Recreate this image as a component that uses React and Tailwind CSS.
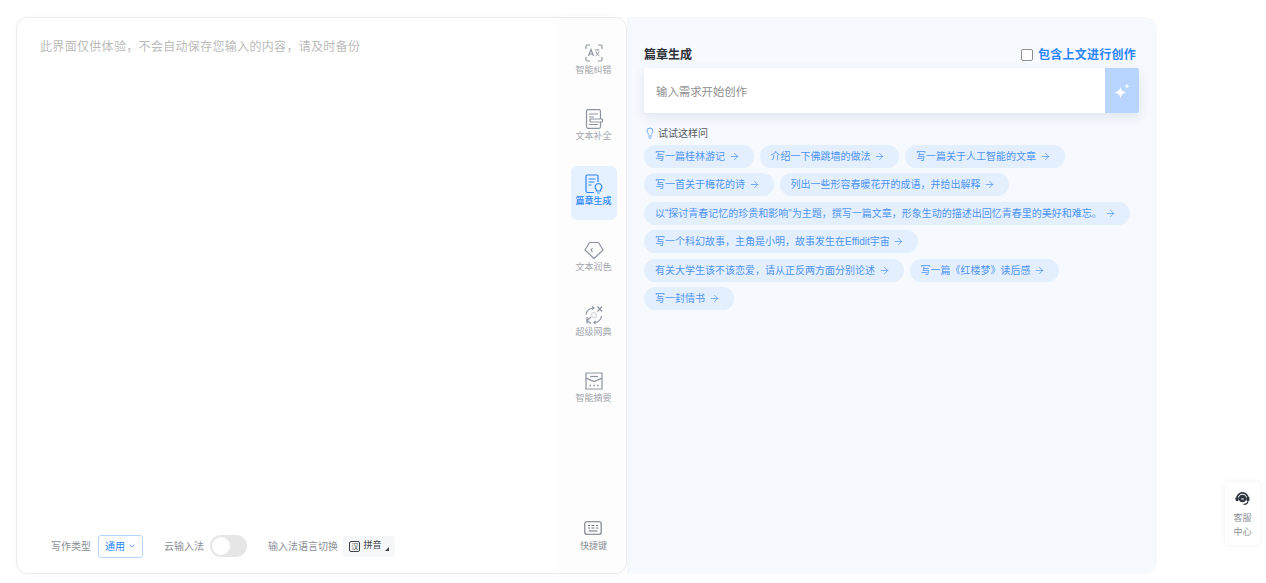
import { ArrowRight, ChevronDown, Lightbulb } from 'lucide-react';

const FONT = "font-['Liberation_Sans','Noto_Sans_CJK_SC',sans-serif]";

const IconCorrect = ({ color = '#8d95a3' }) => (
  <svg width="20" height="20" viewBox="0 0 20 20" fill="none" stroke={color} strokeWidth="1.2">
    <path d="M2 6V3.5A1.5 1.5 0 0 1 3.5 2H6M14 2h2.5A1.5 1.5 0 0 1 18 3.5V6M18 14v2.5a1.5 1.5 0 0 1-1.5 1.5H14M6 18H3.5A1.5 1.5 0 0 1 2 16.5V14" />
    <path d="M4.5 13L7 6.5 9.5 13M5.4 11h3.2" />
    <path d="M11 7h4.5M13.2 6v1M11.8 8.5c.8 2 2 3.5 3.7 4.5M15 8.5c-.7 2-1.8 3.5-3.5 4.5" strokeWidth="0.9" />
  </svg>
);

const IconComplete = ({ color = '#8d95a3' }) => (
  <svg width="20" height="20" viewBox="0 0 20 20" fill="none" stroke={color} strokeWidth="1.2">
    <rect x="2.5" y="0.7" width="14" height="18.6" rx="1.5" />
    <path d="M5 5h9M5 8h5M5 15.5h9" />
    <rect x="6" y="10" width="12.5" height="3" rx="0.5" fill="#fff" />
  </svg>
);

const IconArticle = ({ color = '#2b85ff' }) => (
  <svg width="20" height="20" viewBox="0 0 20 20" fill="none" stroke={color} strokeWidth="1.2">
    <path d="M10 18.5H3.5A1.5 1.5 0 0 1 2 17V2.5A1.5 1.5 0 0 1 3.5 1h9A1.5 1.5 0 0 1 14 2.5V8" />
    <path d="M4.5 5h7M4.5 8h6M4.5 11h3" />
    <path d="M14.5 9.5a3.5 3.5 0 0 1 2 6.3V17h-4v-1.2a3.5 3.5 0 0 1 2-6.3zM13.3 19h2.4" />
  </svg>
);

const IconPolish = ({ color = '#8d95a3' }) => (
  <svg width="20" height="20" viewBox="0 0 20 20" fill="none" stroke={color} strokeWidth="1.2">
    <path d="M5.5 2.5h9L19 10l-9 8.5L1 10z" strokeLinejoin="round" />
    <path d="M8.5 8L7 10l1.5 2" />
  </svg>
);

const IconDict = ({ color = '#8d95a3' }) => (
  <svg width="20" height="20" viewBox="0 0 20 20" fill="none" stroke={color} strokeWidth="1.2">
    <path d="M2 9.5A7.5 7.5 0 0 1 9.5 3M10.5 17.5a7.5 7.5 0 0 0 7-6.5" />
    <path d="M8 1.5L10 3 8 4.5M11.5 16L10 17.5l1.5 1.5" />
    <path d="M13.5 1.5l4.5 5M18 1.5l-4.5 5M3 12v6.5M7 12l-4 3.5 4 3" />
    <circle cx="10" cy="10" r="2.5" stroke="#d7dae0" />
  </svg>
);

const IconSummary = ({ color = '#8d95a3' }) => (
  <svg width="20" height="20" viewBox="0 0 20 20" fill="none" stroke={color} strokeWidth="1.2">
    <path d="M2 2h16v5l-8 3.5L2 7zM2 7v11h16V7" />
    <path d="M6 5.5h8" />
    <path d="M5.5 14.5H7M9.3 14.5h1.5M13 14.5h1.5" strokeWidth="1.5" />
  </svg>
);

const IconKeyboard = () => (
  <svg width="18" height="14" viewBox="0 0 18 14" fill="none" stroke="#6f7682" strokeWidth="1.1">
    <rect x="0.8" y="0.8" width="16.4" height="12.4" rx="2" />
    <path d="M4 4.5h2M7.5 4.5h3M12 4.5h2M4 7h2M7.5 7h3M12 7h2M4.5 10h9" />
  </svg>
);

const IconHeadset = () => (
  <svg width="15" height="15" viewBox="0 0 14 14" fill="none">
    <path d="M1.8 7a5.2 5.2 0 0 1 10.4 0" stroke="#2f3540" strokeWidth="1.6" />
    <rect x="0.5" y="5.5" width="3" height="4" rx="1.3" fill="#2f3540" />
    <rect x="10.5" y="5.5" width="3" height="4" rx="1.3" fill="#2f3540" />
    <circle cx="7" cy="7" r="3.4" fill="#2f3540" />
    <path d="M5.8 7.5h2.4" stroke="#fff" strokeWidth="1" />
    <path d="M12 9.5c0 2-1.5 2.8-4 3" stroke="#2f3540" strokeWidth="1.1" />
  </svg>
);

const IconSparkle = () => (
  <svg width="16" height="16" viewBox="0 0 16 16" fill="#fff">
    <path d="M6.5 3.5C7 7 8.5 8.5 12.5 9.5 8.5 10.5 7 12 6.5 15.5 6 12 4.5 10.5.5 9.5 4.5 8.5 6 7 6.5 3.5z" />
    <path d="M13 .5c.2 1.5.9 2.3 2.5 2.7-1.6.4-2.3 1.1-2.5 2.7-.2-1.6-.9-2.3-2.5-2.7C12.1 2.8 12.8 2 13 .5z" />
  </svg>
);

const tools = [
  { label: '智能纠错', Icon: IconCorrect },
  { label: '文本补全', Icon: IconComplete },
  { label: '篇章生成', Icon: IconArticle, active: true },
  { label: '文本润色', Icon: IconPolish },
  { label: '超级网典', Icon: IconDict },
  { label: '智能摘要', Icon: IconSummary },
];

// one list per row, the wrap points are the ones in the picture
const prompts = [
  ['写一篇桂林游记', '介绍一下佛跳墙的做法', '写一篇关于人工智能的文章'],
  ['写一首关于梅花的诗', '列出一些形容春暖花开的成语，并给出解释'],
  ['以“探讨青春记忆的珍贵和影响”为主题，撰写一篇文章，形象生动的描述出回忆青春里的美好和难忘。'],
  ['写一个科幻故事，主角是小明，故事发生在Effidit宇宙'],
  ['有关大学生该不该恋爱，请从正反两方面分别论述', '写一篇《红楼梦》读后感'],
  ['写一封情书'],
];

const ToolItem = ({ label, Icon, active }) => (
  <div
    className={
      'flex h-[54px] w-[46px] flex-col items-center justify-center gap-[1px] rounded-md pb-[5px] ' +
      (active ? 'bg-[#e6f1ff] font-medium text-[#2b85ff]' : 'text-[#a3a7ae]')
    }
  >
    <Icon />
    <span className="text-[9px] leading-[12px] whitespace-nowrap">{label}</span>
  </div>
);

const PromptChip = ({ text }) => (
  <div className="flex h-[23px] items-center gap-[3.5px] rounded-full bg-[#e4effe] pr-[14px] pl-[11px] text-[10px] whitespace-nowrap text-[#4d94f5]">
    <span>{text}</span>
    <ArrowRight size={11} strokeWidth={1.6} />
  </div>
);

const BottomBar = () => (
  <div className="flex h-[22px] items-center pl-[34px] text-[10px] text-[#8b8f96]">
    <span className="mt-[1px]">写作类型</span>
    <div className="ml-[7px] flex h-[23px] w-[45px] items-center justify-center gap-[3px] rounded-[3px] border border-[#b7d5ff] text-[#2b85ff]">
      <span className="mt-[1px]">通用</span>
      <ChevronDown size={8} strokeWidth={2} />
    </div>
    <span className="mt-[1px] ml-[21px]">云输入法</span>
    <div className="ml-[6px] flex h-[22px] w-[37px] items-center rounded-full bg-[#e6e6e6] px-[2px]">
      <div className="size-[18px] rounded-full bg-white" />
    </div>
    <span className="mt-[1px] ml-[21px]">输入法语言切换</span>
    <div className="ml-[5px] flex h-[21px] w-[52px] items-center justify-center gap-[3px] rounded-[3px] bg-[#f6f7f9] text-[9px] text-[#3e434b]">
      <span className="flex size-[11px] items-center justify-center rounded-[2px] border border-[#3e434b] text-[7px] leading-none">汉</span>
      <span>拼音</span>
      <span className="mt-[5px] h-0 w-0 border-b-[4px] border-l-[4px] border-b-[#3e434b] border-l-transparent" />
    </div>
  </div>
);

const App = () => (
  <div className={'relative flex h-[583px] w-[1266px] overflow-hidden bg-white pt-[17px] pl-4 ' + FONT}>
    {/* editor and tool rail */}
    <div className="z-10 flex h-[557px] w-[611px] rounded-xl border border-[#ececec] bg-white shadow-[0_0_8px_rgba(0,0,0,0.03)]">
      <div className="flex min-w-0 flex-1 flex-col justify-between pt-[20px] pb-[16px]">
        <p className="pl-[23px] text-[12px] leading-[18px] tracking-[0.32px] text-[#bbbbbb]">
          此界面仅供体验，不会自动保存您输入的内容，请及时备份
        </p>
        <BottomBar />
      </div>
      <div className="flex w-[65px] flex-col items-center justify-between rounded-r-xl bg-[#fdfdfd] pt-[17px] pb-[21px] shadow-[-4px_0_8px_rgba(0,0,0,0.015)]">
        <div className="flex flex-col gap-[11.6px]">
          {tools.map((t) => (
            <ToolItem key={t.label} {...t} />
          ))}
        </div>
        <div className="flex flex-col items-center gap-[5px] text-[9px] leading-[12px] text-[#8b8f96]">
          <IconKeyboard />
          <span>快捷键</span>
        </div>
      </div>
    </div>

    {/* generation panel */}
    <div className="h-[557px] w-[530px] rounded-r-xl bg-[#f6f9fe] px-[17px] pt-[28px]">
      <div className="flex h-[20px] items-center justify-between pr-[4px]">
        <span className="text-[12px] font-semibold text-[#2f3237]">篇章生成</span>
        <label className="flex items-center gap-[5px] text-[12px] font-semibold tracking-[0.25px] text-[#2b85ff]">
          <span className="size-[12px] rounded-[2px] border border-[#8e8e8e] bg-white" />
          包含上文进行创作
        </label>
      </div>
      <div className="mt-[3px] flex h-[45px] w-[495px] overflow-hidden rounded-[2px] bg-white shadow-[0_4px_12px_rgba(60,90,140,0.12)]">
        <span className="flex flex-1 items-center pt-[4px] pl-[12px] text-[11.4px] text-[#8f8f8f]">输入需求开始创作</span>
        <div className="flex w-[34px] items-center justify-center bg-[#b8d5ff]">
          <IconSparkle />
        </div>
      </div>
      <div className="mt-[13px] flex h-[14px] items-center gap-[2px] text-[10px] text-[#55595f]">
        <Lightbulb size={12} strokeWidth={1.5} className="text-[#3d8bfd]" />
        <span>试试这样问</span>
      </div>
      <div className="mt-[5px] flex flex-col gap-[5.4px]">
        {prompts.map((row) => (
          <div key={row[0]} className="flex gap-[6px]">
            {row.map((text) => (
              <PromptChip key={text} text={text} />
            ))}
          </div>
        ))}
      </div>
    </div>

    {/* floating service button */}
    <div className="absolute top-[482px] left-[1225px] flex h-[63px] w-[35px] flex-col items-center rounded-[3px] bg-white pt-[9px] text-[9px] leading-[14px] text-[#8b8f96] shadow-[0_0_6px_rgba(0,0,0,0.06)]">
      <IconHeadset />
      <span className="mt-[5px]">客服</span>
      <span>中心</span>
    </div>
  </div>
);

export default App;
